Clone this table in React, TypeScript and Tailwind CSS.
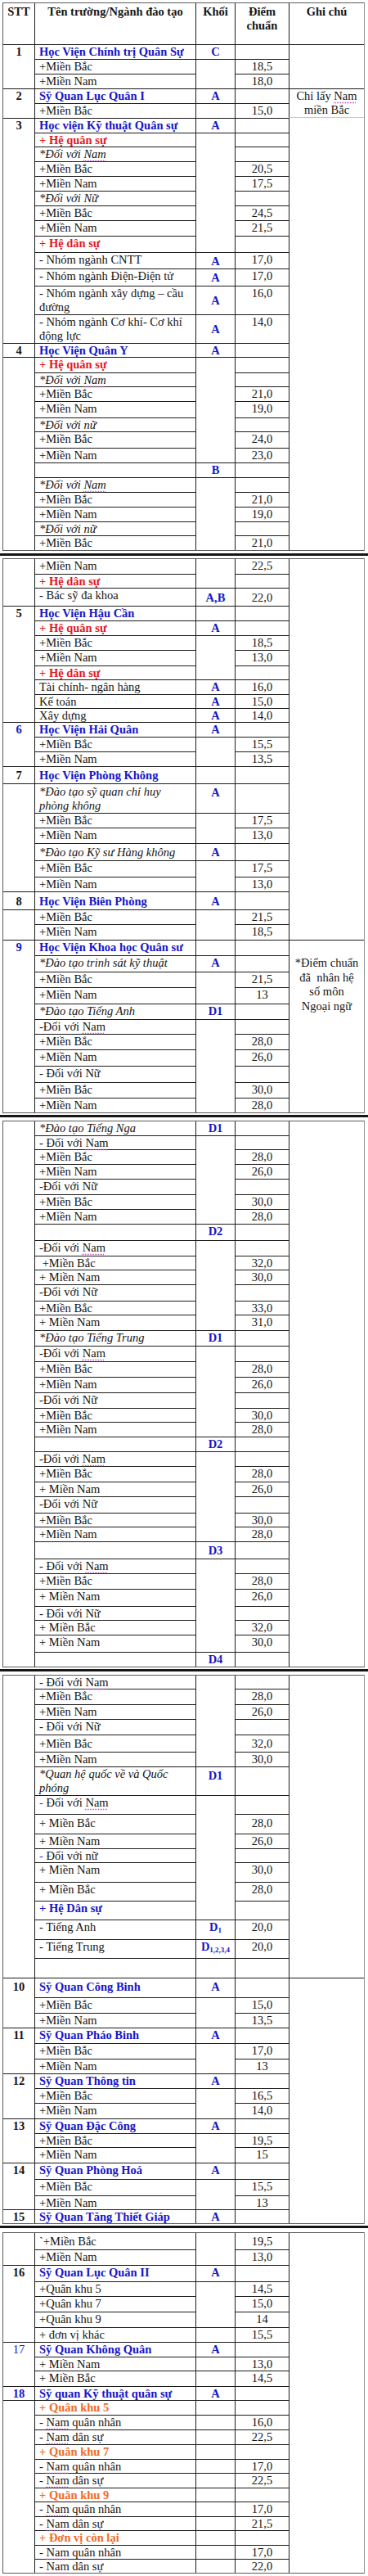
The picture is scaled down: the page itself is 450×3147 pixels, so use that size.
import React from 'react';

type C = { t?: React.ReactNode; span?: number; cls?: string };
type Row = {
  h: string;
  stt?: C;
  name?: React.ReactNode;
  nc?: string;
  khoi?: C;
  diem?: React.ReactNode;
  dc?: string;
  ghi?: C;
};

const c = (t: React.ReactNode = '', span = 1, cls = ''): C => ({ t, span, cls });

const B = 'text-[#1616c6] font-bold';
const RD = 'text-[#e3191f] font-bold';
const OR = 'text-[#ef6b2a] font-bold';
const BK = 'font-bold';
const IT = 'italic';

const Nam = (
  <span className="underline decoration-dotted decoration-[#c050c0] underline-offset-[3px]">Nam</span>
);
const BD = <span className="text-[#3a3ad0]">-</span>;

const A = () => c('A', 1, B);
const D = (sub: string) => (
  <>
    D<sub className="text-[9px]">{sub}</sub>
  </>
);

const seg1: Row[] = [
  {
    h: 'h-[50px]',
    stt: c('STT', 1, 'font-bold pt-[2px]'),
    name: 'Tên trường/Ngành đào tạo',
    nc: 'font-bold text-center pt-[2px] !pl-0',
    khoi: c('Khối', 1, 'font-bold pt-[2px]'),
    diem: (
      <>
        Điểm
        <br />
        chuẩn
      </>
    ),
    dc: 'font-bold pt-[2px] leading-[17px]',
    ghi: c('Ghi chú', 1, 'font-bold pt-[2px]'),
  },
  { h: 'h-[18px]', stt: c('1', 3, BK), name: 'Học Viện Chính trị Quân Sự', nc: B, khoi: c('C', 1, B), ghi: c('', 3) },
  { h: 'h-[18px]', name: '+Miền Bắc', khoi: c('', 2), diem: '18,5' },
  { h: 'h-[18px]', name: '+Miền Nam', diem: '18,0' },
  {
    h: 'h-[18px]',
    stt: c('2', 2, BK),
    name: 'Sỹ Quan Lục Quân I',
    nc: B,
    khoi: A(),
    ghi: c(
      <>
        Chỉ lấy {Nam}
        <br />
        miền Bắc
      </>,
      2,
      'align-middle leading-[17px] border-b border-b-[#c8c8c8]'
    ),
  },
  { h: 'h-[18px]', name: '+Miền Bắc', khoi: c(''), diem: '15,0' },
  { h: 'h-[18px]', stt: c('3', 13, BK), name: 'Học viện Kỹ thuật Quân sự', nc: B, khoi: A(), ghi: c('', 27, '!border-t-0') },
  { h: 'h-[17px]', name: '+ Hệ quân sự', nc: RD, khoi: c('', 8) },
  { h: 'h-[18px]', name: <>*Đối với {Nam}</>, nc: IT },
  { h: 'h-[18px]', name: '+Miền Bắc', diem: '20,5' },
  { h: 'h-[18px]', name: '+Miền Nam', diem: '17,5' },
  { h: 'h-[18px]', name: '*Đối với Nữ', nc: IT },
  { h: 'h-[18px]', name: '+Miền Bắc', diem: '24,5' },
  { h: 'h-[19px]', name: '+Miền Nam', diem: '21,5' },
  { h: 'h-[20px]', name: '+ Hệ dân sự', nc: RD },
  { h: 'h-[20px]', name: '- Nhóm ngành CNTT', khoi: c('A', 1, B + ' align-middle'), diem: '17,0' },
  { h: 'h-[21px]', name: '- Nhóm ngành Điện-Điện tử', khoi: c('A', 1, B + ' align-middle'), diem: '17,0' },
  {
    h: 'h-[34px]',
    name: (
      <>
        - Nhóm ngành xây dựng – cầu
        <br />
        đường
      </>
    ),
    nc: 'leading-[17px]',
    khoi: c('A', 1, B + ' align-middle'),
    diem: '16,0',
  },
  {
    h: 'h-[35px]',
    name: (
      <>
        - Nhóm ngành Cơ khí- Cơ khí
        <br />
        động lực
      </>
    ),
    nc: 'leading-[17px]',
    khoi: c('A', 1, B + ' align-middle'),
    diem: '14,0',
  },
  { h: 'h-[17px]', stt: c('4', 1, BK), name: 'Học Viện Quân Y', nc: B, khoi: A() },
  { h: 'h-[19px]', stt: c('', 13), name: '+ Hệ quân sự', nc: RD, khoi: c('', 7) },
  { h: 'h-[17px]', name: <>*Đối với {Nam}</>, nc: IT },
  { h: 'h-[18px]', name: '+Miền Bắc', diem: '21,0' },
  { h: 'h-[20px]', name: '+Miền Nam', diem: '19,0' },
  { h: 'h-[17px]', name: '*Đối với nữ', nc: IT },
  { h: 'h-[20px]', name: '+Miền Bắc', diem: '24,0' },
  { h: 'h-[18px]', name: '+Miền Nam', diem: '23,0' },
  { h: 'h-[18px]', name: '', khoi: c('B', 1, B) },
  { h: 'h-[18px]', name: <>*Đối với {Nam}</>, nc: IT, khoi: c('', 5) },
  { h: 'h-[18px]', name: '+Miền Bắc', diem: '21,0' },
  { h: 'h-[18px]', name: '+Miền Nam', diem: '19,0' },
  { h: 'h-[17px]', name: '*Đối với nữ', nc: IT },
  { h: 'h-[18px]', name: '+Miền Bắc', diem: '21,0' },
];

const seg2: Row[] = [
  { h: 'h-[18px]', stt: c('', 3), name: '+Miền Nam', khoi: c('', 2), diem: '22,5', ghi: c('', 24) },
  { h: 'h-[17px]', name: '+ Hệ dân sự', nc: RD },
  { h: 'h-[22px]', name: '- Bác sỹ đa khoa', khoi: c('A,B', 1, B + ' align-middle'), diem: '22,0', dc: 'align-middle' },
  { h: 'h-[18px]', stt: c('5', 8, BK), name: 'Học Viện Hậu Cần', nc: B, khoi: c('') },
  { h: 'h-[18px]', name: '+ Hệ quân sự', nc: RD, khoi: A() },
  { h: 'h-[18px]', name: '+Miền Bắc', khoi: c('', 3), diem: '18,5' },
  { h: 'h-[19px]', name: '+Miền Nam', diem: '13,0' },
  { h: 'h-[17px]', name: '+ Hệ dân sự', nc: RD },
  { h: 'h-[18px]', name: 'Tài chính- ngân hàng', khoi: A(), diem: '16,0' },
  { h: 'h-[17px]', name: 'Kế toán', khoi: A(), diem: '15,0' },
  { h: 'h-[17px]', name: 'Xây dựng', khoi: A(), diem: '14,0' },
  { h: 'h-[18px]', stt: c('6', 3, B), name: 'Học Viện Hải Quân', nc: B, khoi: A() },
  { h: 'h-[18px]', name: '+Miền Bắc', khoi: c('', 2), diem: '15,5' },
  { h: 'h-[18px]', name: '+Miền Nam', diem: '13,5' },
  { h: 'h-[21px]', stt: c('7', 1, BK + ' align-middle'), name: 'Học Viện Phòng Không', nc: B + ' align-middle', khoi: c('') },
  {
    h: 'h-[36px]',
    stt: c('', 6),
    name: (
      <>
        *Đào tạo sỹ quan chỉ huy
        <br />
        phòng không
      </>
    ),
    nc: IT + ' leading-[17px] pt-[1px]',
    khoi: c('A', 1, B + ' pt-[2px]'),
  },
  { h: 'h-[18px]', name: '+Miền Bắc', khoi: c('', 2), diem: '17,5' },
  { h: 'h-[19px]', name: '+Miền Nam', diem: '13,0' },
  { h: 'h-[21px]', name: '*Đào tạo Kỹ sư Hàng không', nc: IT + ' align-middle', khoi: c('A', 1, B + ' align-middle') },
  { h: 'h-[20px]', name: '+Miền Bắc', khoi: c('', 2), diem: '17,5' },
  { h: 'h-[18px]', name: '+Miền Nam', diem: '13,0' },
  { h: 'h-[22px]', stt: c('8', 1, BK + ' align-middle'), name: 'Học Viện Biên Phòng', nc: B + ' align-middle', khoi: c('A', 1, B + ' align-middle') },
  { h: 'h-[18px]', stt: c('', 2), name: '+Miền Bắc', khoi: c('', 2), diem: '21,5' },
  { h: 'h-[19px]', name: '+Miền Nam', diem: '18,5' },
  {
    h: 'h-[19px]',
    stt: c('9', 11, B),
    name: 'Học Viện Khoa học Quân sư',
    nc: B,
    khoi: c(''),
    ghi: c(
      <>
        *Điểm chuẩn
        <br />
        đã&nbsp; nhân hệ
        <br />
        số môn
        <br />
        Ngoại ngữ
      </>,
      11,
      'pt-[19px] leading-[17.5px]'
    ),
  },
  { h: 'h-[20px]', name: '*Đào tạo trinh sát kỹ thuật', nc: IT, khoi: A() },
  { h: 'h-[19px]', name: '+Miền Bắc', khoi: c('', 2), diem: '21,5' },
  { h: 'h-[20px]', name: '+Miền Nam', diem: '13' },
  { h: 'h-[19px]', name: '*Đào tạo Tiếng Anh', nc: IT, khoi: c('D1', 1, B) },
  { h: 'h-[18px]', name: <>-Đối với {Nam}</>, khoi: c('', 6) },
  { h: 'h-[19px]', name: '+Miền Bắc', diem: '28,0' },
  { h: 'h-[20px]', name: '+Miền Nam', diem: '26,0' },
  { h: 'h-[20px]', name: '- Đối với Nữ' },
  { h: 'h-[19px]', name: '+Miền Bắc', diem: '30,0' },
  { h: 'h-[18px]', name: '+Miền Nam', diem: '28,0' },
];

const seg3: Row[] = [
  { h: 'h-[17px]', stt: c('', 36), name: '*Đào tạo Tiếng Nga', nc: IT, khoi: c('D1', 1, B), ghi: c('', 36) },
  { h: 'h-[17px]', name: <>- Đối với {Nam}</>, khoi: c('', 6) },
  { h: 'h-[18px]', name: '+Miền Bắc', diem: '28,0' },
  { h: 'h-[18px]', name: '+Miền Nam', diem: '26,0' },
  { h: 'h-[19px]', name: '-Đối với Nữ' },
  { h: 'h-[18px]', name: '+Miền Bắc', diem: '30,0' },
  { h: 'h-[18px]', name: '+Miền Nam', diem: '28,0' },
  { h: 'h-[20px]', name: '', khoi: c('D2', 1, B) },
  { h: 'h-[19px]', name: <>-Đối với {Nam}</>, khoi: c('', 6) },
  { h: 'h-[17px]', name: <>&nbsp;+Miền Bắc</>, diem: '32,0' },
  { h: 'h-[18px]', name: '+ Miền Nam', diem: '30,0' },
  { h: 'h-[20px]', name: '-Đối với Nữ' },
  { h: 'h-[17px]', name: '+Miền Bắc', diem: '33,0' },
  { h: 'h-[19px]', name: '+ Miền Nam', diem: '31,0' },
  { h: 'h-[19px]', name: '*Đào tạo Tiếng Trung', nc: IT, khoi: c('D1', 1, B) },
  { h: 'h-[19px]', name: <>-Đối với {Nam}</>, khoi: c('', 6) },
  { h: 'h-[19px]', name: '+Miền Bắc', diem: '28,0' },
  { h: 'h-[19px]', name: '+Miền Nam', diem: '26,0' },
  { h: 'h-[19px]', name: '-Đối với Nữ' },
  { h: 'h-[17px]', name: '+Miền Bắc', diem: '30,0' },
  { h: 'h-[18px]', name: '+Miền Nam', diem: '28,0' },
  { h: 'h-[18px]', name: '', khoi: c('D2', 1, B) },
  { h: 'h-[18px]', name: <>-Đối với {Nam}</>, khoi: c('', 6) },
  { h: 'h-[19px]', name: '+Miền Bắc', diem: '28,0' },
  { h: 'h-[18px]', name: '+ Miền Nam', diem: '26,0' },
  { h: 'h-[20px]', name: '-Đối với Nữ' },
  { h: 'h-[17px]', name: '+Miền Bắc', diem: '30,0' },
  { h: 'h-[18px]', name: '+Miền Nam', diem: '28,0' },
  { h: 'h-[21px]', name: '', khoi: c('D3', 1, B + ' align-middle') },
  { h: 'h-[18px]', name: <>- Đối với {Nam}</>, khoi: c('', 6) },
  { h: 'h-[19px]', name: '+Miền Bắc', diem: '28,0' },
  { h: 'h-[21px]', name: '+ Miền Nam', diem: '26,0' },
  { h: 'h-[17px]', name: '- Đối với Nữ' },
  { h: 'h-[18px]', name: '+ Miền Bắc', diem: '32,0' },
  { h: 'h-[21px]', name: '+ Miền Nam', diem: '30,0' },
  { h: 'h-[18px]', name: '', khoi: c('D4', 1, B) },
];

const seg4: Row[] = [
  { h: 'h-[16px]', stt: c('', 17), name: <>- Đối với {Nam}</>, khoi: c('', 6), ghi: c('', 17) },
  { h: 'h-[19px]', name: '+Miền Bắc', diem: '28,0' },
  { h: 'h-[18px]', name: '+Miền Nam', diem: '26,0' },
  { h: 'h-[19px]', name: '- Đối với Nữ' },
  { h: 'h-[21px]', name: '+Miền Bắc', diem: '32,0', nc: 'align-middle', dc: 'align-middle' },
  { h: 'h-[18px]', name: '+Miền Nam', diem: '30,0' },
  {
    h: 'h-[35px]',
    name: (
      <>
        *Quan hệ quốc về và Quốc
        <br />
        phóng
      </>
    ),
    nc: IT + ' leading-[17px]',
    khoi: c('D1', 1, B + ' pt-[2px]'),
  },
  { h: 'h-[23px]', name: <>{BD} Đối với {Nam}</>, khoi: c('', 7) },
  { h: 'h-[24px]', name: '+ Miền Bắc', diem: '28,0', nc: 'pt-[2px]', dc: 'pt-[2px]' },
  { h: 'h-[18px]', name: '+ Miền Nam', diem: '26,0' },
  { h: 'h-[17px]', name: <>{BD} Đối với nữ</> },
  { h: 'h-[24px]', name: '+ Miền Nam', diem: '30,0' },
  { h: 'h-[23px]', name: '+ Miền Bắc', diem: '28,0' },
  { h: 'h-[23px]', name: '+ Hệ Dân sự', nc: B, khoi: c('') },
  { h: 'h-[24px]', name: '- Tiếng Anh', khoi: c(D('1'), 1, B), diem: '20,0' },
  { h: 'h-[23px]', name: '- Tiếng Trung', khoi: c(D('1,2,3,4'), 1, B), diem: '20,0' },
  { h: 'h-[24px]', name: '', khoi: c('') },
  { h: 'h-[24px]', stt: c('10', 3, BK + ' pt-[2px]'), name: 'Sỹ Quan Công Binh', nc: B + ' pt-[2px]', khoi: c('A', 1, B + ' pt-[2px]'), ghi: c('', 16) },
  { h: 'h-[19px]', name: '+Miền Bắc', khoi: c('', 2), diem: '15,0' },
  { h: 'h-[18px]', name: '+Miền Nam', diem: '13,5' },
  { h: 'h-[19px]', stt: c('11', 3, BK), name: 'Sỹ Quan Pháo Binh', nc: B, khoi: A() },
  { h: 'h-[19px]', name: '+Miền Bắc', khoi: c('', 2), diem: '17,0' },
  { h: 'h-[18px]', name: '+Miền Nam', diem: '13' },
  { h: 'h-[18px]', stt: c('12', 3, BK), name: 'Sỹ Quan Thông tin', nc: B, khoi: A() },
  { h: 'h-[18px]', name: '+Miền Bắc', khoi: c('', 2), diem: '16,5' },
  { h: 'h-[19px]', name: '+Miền Nam', diem: '14,0' },
  { h: 'h-[18px]', stt: c('13', 3, BK), name: 'Sỹ Quan Đặc Công', nc: B, khoi: A() },
  { h: 'h-[17px]', name: '+Miền Bắc', khoi: c('', 2), diem: '19,5' },
  { h: 'h-[19px]', name: '+Miền Nam', diem: '15' },
  { h: 'h-[20px]', stt: c('14', 3, BK), name: 'Sỹ Quan Phòng Hoá', nc: B, khoi: A() },
  { h: 'h-[20px]', name: '+Miền Bắc', khoi: c('', 2), diem: '15,5' },
  { h: 'h-[17px]', name: '+Miền Nam', diem: '13' },
  { h: 'h-[17px]', stt: c('15', 1, BK), name: 'Sỹ Quan Tăng Thiết Giáp', nc: B, khoi: A() },
];

const seg5: Row[] = [
  { h: 'h-[20px]', stt: c('', 2), name: '`+Miền Bắc', nc: 'pt-[2px]', khoi: c('', 2), diem: '19,5', dc: 'pt-[2px]', ghi: c('', 23) },
  { h: 'h-[19px]', name: '+Miền Nam', diem: '13,0' },
  { h: 'h-[20px]', stt: c('16', 5, BK), name: 'Sỹ Quan Lục Quân II', nc: B, khoi: A() },
  { h: 'h-[18px]', name: '+Quân khu 5', khoi: c('', 3), diem: '14,5' },
  { h: 'h-[19px]', name: '+Quân khu 7', diem: '15,0' },
  { h: 'h-[19px]', name: '+Quân khu 9', diem: '14' },
  { h: 'h-[18px]', name: '+ đơn vị khác', khoi: c(''), diem: '15,5' },
  { h: 'h-[18px]', stt: c('17', 3, 'text-[#1616c6]'), name: 'Sỹ Quan Không Quân', nc: B, khoi: A() },
  { h: 'h-[17px]', name: '+ Miền Nam', khoi: c(''), diem: '13,0' },
  { h: 'h-[19px]', name: '+ Miền Bắc', khoi: c(''), diem: '14,5' },
  { h: 'h-[17px]', stt: c('18', 1, B), name: 'Sỹ quan Kỹ thuật quân sự', nc: B, khoi: A() },
  { h: 'h-[18px]', stt: c('', 12), name: '+ Quân khu 5', nc: OR, khoi: c('') },
  { h: 'h-[18px]', name: <>- {Nam} quân nhân</>, khoi: c(''), diem: '16,0' },
  { h: 'h-[18px]', name: <>- {Nam} dân sự</>, khoi: c(''), diem: '22,5' },
  { h: 'h-[18px]', name: '+ Quân khu 7', nc: OR, khoi: c('') },
  { h: 'h-[17px]', name: <>- {Nam} quân nhân</>, khoi: c(''), diem: '17,0' },
  { h: 'h-[18px]', name: <>- {Nam} dân sự</>, khoi: c(''), diem: '22,5' },
  { h: 'h-[17px]', name: '+ Quân khu 9', nc: OR, khoi: c('') },
  { h: 'h-[18px]', name: <>- {Nam} quân nhân</>, khoi: c(''), diem: '17,0' },
  { h: 'h-[17px]', name: <>- {Nam} dân sự</>, khoi: c(''), diem: '21,5' },
  { h: 'h-[18px]', name: '+ Đơn vị còn lại', nc: OR, khoi: c('') },
  { h: 'h-[17px]', name: <>- {Nam} quân nhân</>, khoi: c(''), diem: '17,0' },
  { h: 'h-[17px]', name: <>- {Nam} dân sự</>, khoi: c(''), diem: '22,0' },
];

const va = (cls: string) => (cls.includes('align-middle') ? '' : 'align-top');

function Segment({ rows, className = '' }: { rows: Row[]; className?: string }) {
  return (
    <table
      className={`ml-[3px] w-[443px] table-fixed border-separate border-spacing-0 border border-[#5a5a5a] border-r-[#8e8e8e] ${className}`}
    >
      <colgroup>
        <col className="w-[38px]" />
        <col className="w-[197px]" />
        <col className="w-[48px]" />
        <col className="w-[66px]" />
        <col className="w-[92px]" />
      </colgroup>
      <tbody>
        {rows.map((r, i) => {
          const bt = i === 0 ? '' : 'border-t';
          const base = `p-0 ${bt} border-[#1c1c1c]`;
          const nc = r.nc ?? '';
          const dc = r.dc ?? '';
          return (
            <tr key={i} className={r.h}>
              {r.stt && (
                <td rowSpan={r.stt.span} className={`${base} text-center ${va(r.stt.cls ?? '')} ${r.stt.cls}`}>
                  {r.stt.t}
                </td>
              )}
              <td className={`${base} border-l pl-[5px] whitespace-nowrap ${va(nc)} ${nc}`}>{r.name}</td>
              {r.khoi && (
                <td
                  rowSpan={r.khoi.span}
                  className={`${base} border-l text-center ${va(r.khoi.cls ?? '')} ${r.khoi.cls}`}
                >
                  {r.khoi.t}
                </td>
              )}
              <td className={`${base} border-l text-center ${va(dc)} ${dc}`}>{r.diem}</td>
              {r.ghi && (
                <td
                  rowSpan={r.ghi.span}
                  className={`${base} border-l text-center ${va(r.ghi.cls ?? '')} ${r.ghi.cls}`}
                >
                  {r.ghi.t}
                </td>
              )}
            </tr>
          );
        })}
      </tbody>
    </table>
  );
}

function Sep({ top, bottom }: { top: string; bottom: string }) {
  return <div className={`${top} ${bottom} h-[3px] w-[450px] bg-[#161616]`} />;
}

export default function App() {
  return (
    <div className="w-[450px] bg-white pt-[3px] pb-[6px] font-['Liberation_Serif',serif] text-[14.5px] leading-[16px] text-[#151515]">
      <Segment rows={seg1} />
      <Sep top="mt-[3px]" bottom="mb-[3px]" />
      <Segment rows={seg2} />
      <Sep top="mt-[2px]" bottom="mb-[4px]" />
      <Segment rows={seg3} />
      <Sep top="mt-[2px]" bottom="mb-[4px]" />
      <Segment rows={seg4} />
      <Sep top="mt-[2px]" bottom="mb-[5px]" />
      <Segment rows={seg5} />
    </div>
  );
}
